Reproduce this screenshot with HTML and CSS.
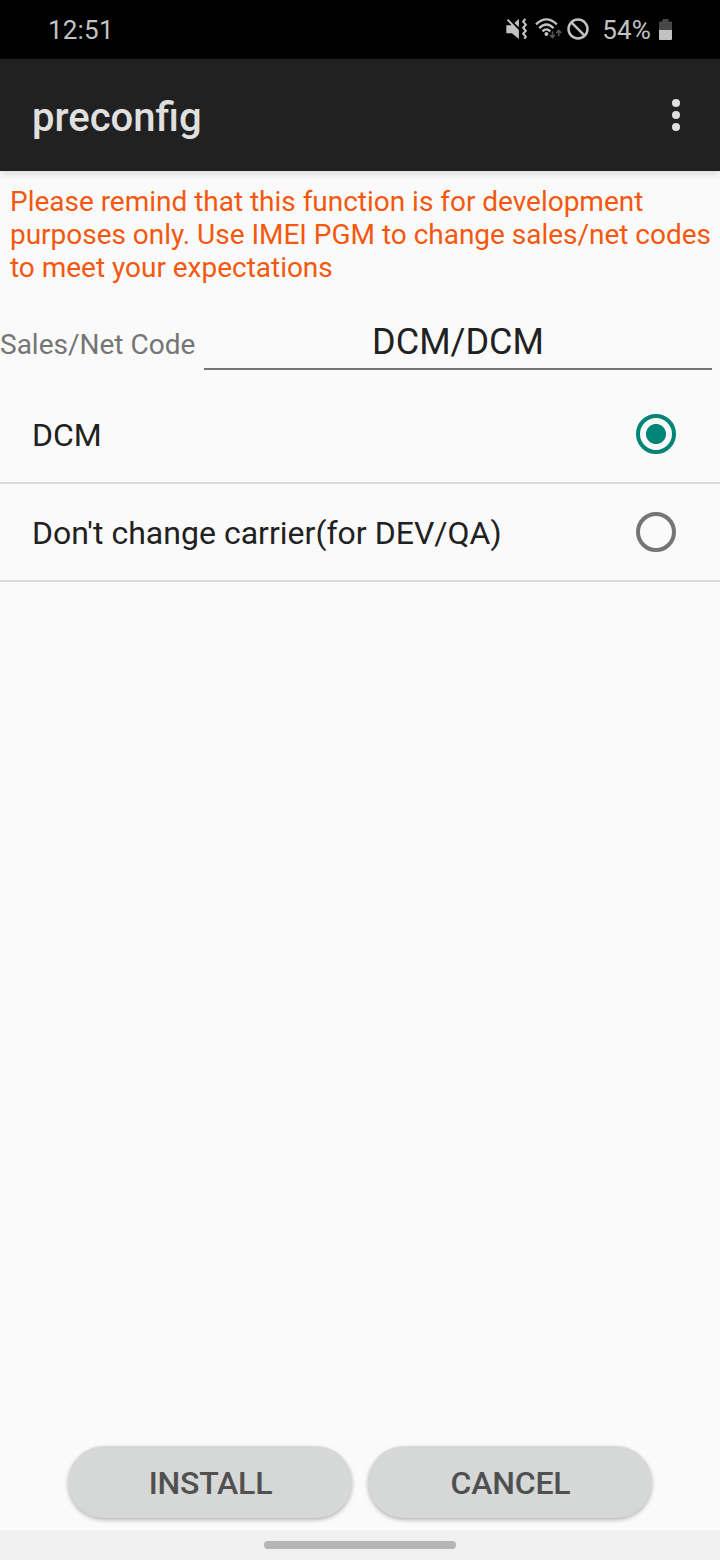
FILE: index.html
```
<!DOCTYPE html>
<html lang="en">
<head>
  <meta charset="UTF-8">
  <meta name="viewport" content="width=device-width, initial-scale=1.0">
  <title>preconfig</title>
  <link rel="stylesheet" href="styles.css">
</head>
<body>

  <!-- Status Bar -->
  <div class="status-bar">
    <span class="clock">12:51</span>
    <div class="status-icons">
      <svg class="icon-mute" width="22" height="22" viewBox="0 0 22 22">
        <path fill="#c2c2c2" d="M0.3 7.3H5.6L0.9 2.2L2.2 0.9L12.9 12V21L5.8 15.2H0.3zM8.4 5L12.9 0.8V9.3z"/>
        <path fill="none" stroke="#c2c2c2" stroke-width="2.1" d="M19.4 0.8L17.2 3.6L19.8 6.7L17.2 9.7L19.8 12.8L17.2 15.8L19.8 18.6L18.4 20.8"/>
      </svg>
      <svg class="icon-wifi" width="27" height="22" viewBox="0 0 27 22">
        <g fill="none" stroke="#c2c2c2" stroke-width="2.3">
          <path d="M1 6.4Q11.4 -3.6 21.8 6.4"/>
          <path d="M4.3 10.1Q11.4 3 18.5 10.1"/>
          <path d="M7.5 13.4Q11.4 9.4 15.3 13.4"/>
        </g>
        <circle cx="11.4" cy="16" r="2" fill="#c2c2c2"/>
        <g fill="none" stroke="#555" stroke-width="1.7">
          <path d="M17.5 13.2V19.4M15 17L17.5 19.6L20 17"/>
          <path d="M23.7 18.2V12.4M21.2 15L23.7 12.4L26.2 15"/>
        </g>
      </svg>
      <svg class="icon-block" width="22" height="22" viewBox="0 0 22 22">
        <g fill="none" stroke="#c2c2c2" stroke-width="2.5">
          <circle cx="11" cy="11" r="9.5"/>
          <path d="M4.4 4.4L17.6 17.6"/>
        </g>
      </svg>
      <span class="battery-text">54%</span>
      <svg class="icon-battery" width="13" height="21" viewBox="0 0 13 21">
        <path fill="#484848" d="M3.5 0H9.5V2.5H12Q13 2.5 13 3.5V11H0V3.5Q0 2.5 1 2.5H3.5z"/>
        <path fill="#c2c2c2" d="M0 11H13V20Q13 21 12 21H1Q0 21 0 20z"/>
      </svg>
    </div>
  </div>

  <!-- App Bar -->
  <header>
    <h1>preconfig</h1>
    <button class="menu-btn" aria-label="More options">
      <svg width="8" height="32" viewBox="0 0 8 32" fill="#e0e0e0">
        <circle cx="4" cy="4" r="4"/>
        <circle cx="4" cy="16" r="4"/>
        <circle cx="4" cy="28" r="4"/>
      </svg>
    </button>
  </header>

  <main>
    <p class="notice">Please remind that this function is for development purposes only. Use IMEI PGM to change sales/net codes to meet your expectations</p>

    <div class="code-row">
      <label for="code">Sales/Net Code</label>
      <input type="text" id="code" value="DCM/DCM">
    </div>

    <!-- Carrier List -->
    <div class="carrier-list">
      <label class="carrier">
        <span>DCM</span>
        <input type="radio" name="carrier" checked>
      </label>
      <label class="carrier">
        <span>Don't change carrier(for DEV/QA)</span>
        <input type="radio" name="carrier">
      </label>
    </div>

    <div class="actions">
      <button>INSTALL</button>
      <button>CANCEL</button>
    </div>
  </main>

  <!-- Navigation Bar -->
  <div class="nav-bar">
    <div class="handle"></div>
  </div>

</body>
</html>
```

FILE: styles.css
```
* {
  box-sizing: border-box;
  margin: 0;
  padding: 0;
}

body {
  font-family: Roboto, sans-serif;
  background-color: #fafafa;
  color: #212121;
  height: 1560px;
  display: flex;
  flex-direction: column;
}

svg {
  display: block;
}

.status-bar {
  height: 59px;
  background-color: #000;
  color: #c2c2c2;
  display: flex;
  align-items: center;
  justify-content: space-between;
  padding: 0 48px;
  font-size: 26px;
}

.clock {
  letter-spacing: 0.2px;
  padding-top: 1px;
}

.status-icons {
  display: flex;
  align-items: center;
  padding-bottom: 1px;
}

.icon-wifi {
  margin-left: 7px;
}

.icon-block {
  margin-left: 5px;
}

.battery-text {
  margin-left: 13px;
  padding-top: 2px;
  letter-spacing: 0.2px;
}

.icon-battery {
  margin-left: 8px;
}

header {
  height: 112px;
  background-color: #212121;
  display: flex;
  align-items: center;
  justify-content: space-between;
  padding: 0 40px 0 32px;
  box-shadow: 0 2px 8px rgba(0, 0, 0, 0.15);
}

header h1 {
  font-size: 40px;
  font-weight: 500;
  line-height: 48px;
  color: #e0e0e0;
  padding-top: 6px;
}

.menu-btn {
  background: none;
  border: none;
}

main {
  flex: 1;
  display: flex;
  flex-direction: column;
}

.notice {
  padding: 14px 0 0 10px;
  font-size: 28px;
  line-height: 33px;
  letter-spacing: -0.02px;
  color: #f4580f;
}

.code-row {
  display: flex;
  align-items: baseline;
  margin-top: 34px;
  padding-right: 8px;
}

.code-row label {
  width: 204px;
  font-size: 28px;
  color: #757575;
}

.code-row input {
  flex: 1;
  min-width: 0;
  height: 52px;
  padding-bottom: 2px;
  border: none;
  border-bottom: 2px solid #757575;
  background: none;
  color: #212121;
  font-family: inherit;
  font-size: 36px;
  text-align: center;
}

.carrier-list {
  margin-top: 16px;
}

.carrier {
  height: 98px;
  display: flex;
  align-items: center;
  justify-content: space-between;
  padding: 0 44px 0 32px;
  border-bottom: 2px solid #dadada;
  font-size: 32px;
  letter-spacing: 0.02px;
}

.carrier span {
  padding-top: 1px;
}

.carrier input {
  appearance: none;
  width: 40px;
  height: 40px;
  border: 4px solid #757575;
  border-radius: 50%;
}

.carrier input:checked {
  border-color: #008577;
  background: radial-gradient(circle, #008577 9.6px, transparent 10.4px);
}

.actions {
  display: flex;
  justify-content: center;
  gap: 16px;
  margin-top: auto;
  padding-bottom: 12px;
}

.actions button {
  width: 284px;
  height: 72px;
  padding: 2px 0 0 1px;
  border: none;
  border-radius: 36px;
  background-color: #d6d7d7;
  box-shadow: 0 2px 4px rgba(0, 0, 0, 0.28);
  color: #505050;
  font-family: inherit;
  font-size: 32px;
  font-weight: 500;
  letter-spacing: -0.2px;
}

.nav-bar {
  height: 30px;
  background-color: #f1f1f1;
  display: flex;
  align-items: center;
  justify-content: center;
}

.handle {
  width: 192px;
  height: 8px;
  border-radius: 4px;
  background-color: #b5b5b5;
}
```
